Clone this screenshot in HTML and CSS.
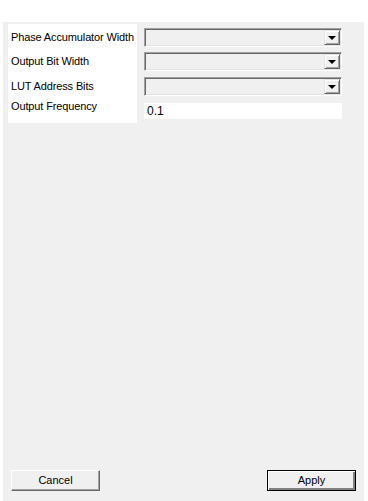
FILE: index.html
```html
<!DOCTYPE html>
<html>
<head>
<meta charset="utf-8">
<link rel="stylesheet" href="styles.css">
</head>
<body>
<div class="window">
  <div class="form">
    <div class="labels">
      <div class="label l1">Phase Accumulator Width</div>
      <div class="label l2">Output Bit Width</div>
      <div class="label l3">LUT Address Bits</div>
      <div class="label l4">Output Frequency</div>
    </div>
    <div class="fields">
      <div class="combo c1"><div class="combo-btn"><span class="tri"></span></div></div>
      <div class="combo c2"><div class="combo-btn"><span class="tri"></span></div></div>
      <div class="combo c3"><div class="combo-btn"><span class="tri"></span></div></div>
      <div class="text-field">0.1</div>
    </div>
  </div>
  <div class="buttons">
    <div class="btn">Cancel</div>
    <div class="btn default">Apply</div>
  </div>
</div>
</body>
</html>
```
FILE: styles.css
```css
html, body {
  margin: 0;
  padding: 0;
  background: #ffffff;
  font-family: "Liberation Sans", Arial, sans-serif;
  font-size: 11px;
  color: #000;
}
.window {
  margin: 22px 4px 0 3px;
  height: 479px;
  background: #f0f0f0;
  display: flex;
  flex-direction: column;
  justify-content: space-between;
  box-sizing: border-box;
  padding: 2px 0 10px 0;
}
.form {
  display: flex;
  padding-left: 5px;
  gap: 7px;
}
.labels {
  width: 129px;
  height: 99px;
  background: #ffffff;
  box-sizing: border-box;
  padding-left: 3px;
  display: flex;
  flex-direction: column;
}
.label {
  line-height: 13px;
  white-space: nowrap;
  letter-spacing: -0.13px;
}
.l1 { margin-top: 7px; }
.l2 { margin-top: 11px; }
.l3 { margin-top: 12px; }
.l4 { margin-top: 7px; }
.fields {
  width: 198px;
  display: flex;
  flex-direction: column;
}
.combo {
  height: 19px;
  box-sizing: border-box;
  border-top: 1px solid #a0a0a0;
  border-left: 1px solid #a0a0a0;
  border-right: 1px solid #ffffff;
  border-bottom: 1px solid #ffffff;
  box-shadow: inset 1px 1px 0 #696969, inset -1px -1px 0 #e3e3e3;
  background: #f0f0f0;
  display: flex;
  justify-content: flex-end;
  padding: 1px;
}
.c1 { margin-top: 4px; }
.c2 { margin-top: 5px; }
.c3 { margin-top: 6px; }
.combo-btn {
  width: 16px;
  height: 15px;
  box-sizing: border-box;
  background: #f0f0f0;
  border-top: 1px solid #e3e3e3;
  border-left: 1px solid #e3e3e3;
  border-right: 1px solid #696969;
  border-bottom: 1px solid #696969;
  box-shadow: inset 1px 1px 0 #ffffff, inset -1px -1px 0 #a0a0a0;
  display: flex;
  align-items: center;
  justify-content: center;
}
.tri {
  width: 0;
  height: 0;
  border-left: 4px solid transparent;
  border-right: 4px solid transparent;
  border-top: 4px solid #000;
  margin-top: 1px;
}
.text-field {
  margin-top: 7px;
  height: 16px;
  background: #ffffff;
  box-sizing: border-box;
  padding-left: 3px;
  line-height: 17px;
  font-size: 12px;
}
.buttons {
  display: flex;
  justify-content: space-between;
  padding: 0 8px;
}
.btn {
  width: 89px;
  height: 21px;
  box-sizing: border-box;
  background: #f0f0f0;
  border-top: 1px solid #ffffff;
  border-left: 1px solid #ffffff;
  border-right: 1px solid #696969;
  border-bottom: 1px solid #696969;
  box-shadow: inset -1px -1px 0 #a0a0a0;
  text-align: center;
  line-height: 19px;
  font-size: 11px;
}
.btn.default {
  border: 1px solid #000;
  box-shadow: inset 1px 1px 0 #ffffff, inset -2px -2px 0 #808080;
}
```
